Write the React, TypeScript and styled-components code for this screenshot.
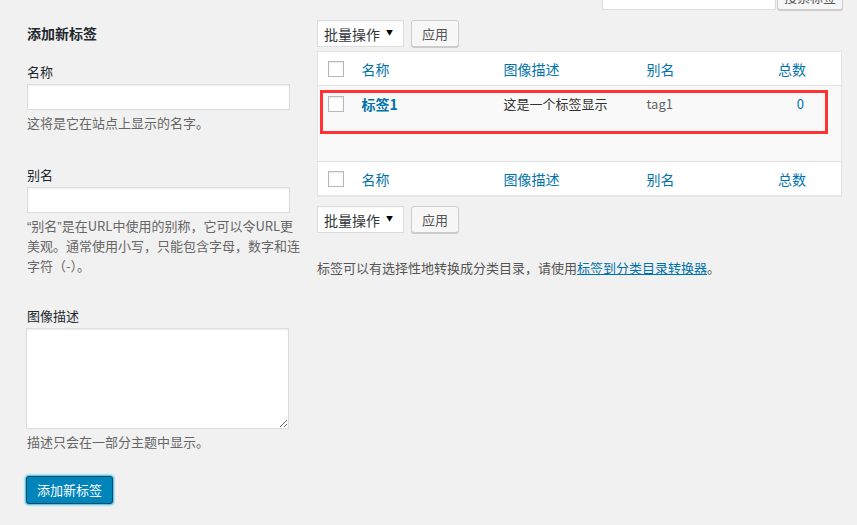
import React from 'react';
import styled, { createGlobalStyle } from 'styled-components';

const GlobalStyle = createGlobalStyle`
  html, body {
    margin: 0;
    padding: 0;
    background: #f1f1f1;
    overflow: hidden;
  }
  body {
    font-family: "Noto Sans CJK SC", "Open Sans", sans-serif;
    font-size: 13px;
    line-height: 20px;
    color: #444;
  }
  * {
    box-sizing: border-box;
  }
`;

const Page = styled.div`
  display: flex;
  align-items: flex-start;
  width: 857px;
  height: 525px;
  overflow: hidden;
`;

const ColLeft = styled.div`
  width: 277px;
  margin-left: 27px;
  padding-top: 23px;
`;

const ColRight = styled.div`
  width: 525px;
  margin-left: 13px;
`;

const Heading = styled.h2`
  margin: 0 0 19px;
  font-size: 14px;
  line-height: 20px;
  font-weight: 700;
  color: #23282d;
`;

const Field = styled.div<{ $gap?: number }>`
  margin-bottom: ${p => p.$gap ?? 32}px;
`;

const Label = styled.label`
  display: block;
  color: #23282d;
  line-height: 20px;
  margin-bottom: 2px;
`;

const TextInput = styled.input`
  display: block;
  width: 263px;
  height: 26px;
  margin: 0;
  padding: 3px 5px;
  border: 1px solid #ddd;
  background: #fff;
  box-shadow: inset 0 1px 2px rgba(0, 0, 0, 0.07);
  font: inherit;
  outline: none;
`;

const TextArea = styled.textarea`
  display: block;
  width: 263px;
  height: 101px;
  margin: 0 0 0 -1px;
  padding: 2px 6px;
  border: 1px solid #ddd;
  background: #fff;
  box-shadow: inset 0 1px 2px rgba(0, 0, 0, 0.07);
  font: inherit;
  outline: none;
`;

const Help = styled.p`
  margin: 3px 0 0;
  color: #666;
  line-height: 19.5px;
`;

const Quote = styled.span`
  font-family: "Liberation Sans", sans-serif;
`;

const PrimaryButton = styled.button`
  height: 28px;
  margin: 4px 0 0 -1px;
  padding: 0 10px;
  border: 1px solid #0b4d6e;
  border-radius: 3px;
  background: #0085ba;
  color: #fff;
  font: inherit;
  line-height: 26px;
  box-shadow: 0 0 2px 1px #33b3db;
  cursor: pointer;
`;

const SearchBar = styled.div`
  display: flex;
  justify-content: flex-end;
  gap: 1px;
  margin-top: -18px;
  margin-right: -1px;
`;

const SearchInput = styled.input`
  width: 174px;
  height: 28px;
  margin: 0;
  border: 1px solid #ddd;
  background: #fff;
  box-shadow: inset 0 1px 2px rgba(0, 0, 0, 0.07);
  font: inherit;
  outline: none;
`;

const Button = styled.button<{ $pad?: number; $height?: number }>`
  height: ${p => p.$height ?? 27}px;
  padding: 0 ${p => p.$pad ?? 10}px;
  border: 1px solid #ccc;
  border-radius: 3px;
  background: #f7f7f7;
  color: #555;
  font: inherit;
  line-height: 25px;
  box-shadow: 0 1px 0 #ccc;
  cursor: pointer;
  white-space: nowrap;
`;

const TableNav = styled.div<{ $top: number; $bottom: number }>`
  display: flex;
  align-items: center;
  gap: 7px;
  margin: ${p => p.$top}px 0 ${p => p.$bottom}px;
`;

const BulkSelect = styled.div`
  display: flex;
  align-items: center;
  justify-content: space-between;
  width: 87px;
  height: 27px;
  padding: 0 10px 0 6px;
  border: 1px solid #ddd;
  background: #fff;
  color: #32373c;
  font-size: 14px;
  box-shadow: inset 0 1px 2px rgba(0, 0, 0, 0.04);
`;

const Caret = styled.span`
  font-size: 7px;
  line-height: 7px;
  color: #000;
  margin-top: -3px;
`;

const TableWrap = styled.div`
  position: relative;
`;

const Table = styled.table`
  width: 524px;
  border-collapse: collapse;
  table-layout: fixed;
  background: #fff;
  border: 1px solid #e5e5e5;
  box-shadow: 0 1px 1px rgba(0, 0, 0, 0.04);
`;

const HeadCell = styled.th<{ $align?: string; $padRight?: number }>`
  height: 34px;
  padding: 0 ${p => p.$padRight ?? 10}px 0 10px;
  text-align: ${p => p.$align ?? 'left'};
  font-weight: 400;
  font-size: 14px;
  color: #0073aa;
  vertical-align: middle;
`;

const HeadRow = styled.tr<{ $top?: boolean }>`
  ${p => (p.$top ? 'border-bottom: 1px solid #e1e1e1;' : 'border-top: 1px solid #e1e1e1;')}
`;

const BodyRow = styled.tr`
  background: #f9f9f9;
`;

const Cell = styled.td<{ $align?: string }>`
  height: 76px;
  padding: 8px 10px 0;
  vertical-align: top;
  text-align: ${p => p.$align ?? 'left'};
  color: #333;
`;

const CheckCell = styled.td<{ $top?: number }>`
  padding: ${p => p.$top ?? 0}px 0 0 10px;
  vertical-align: ${p => (p.$top ? 'top' : 'middle')};
`;

const CheckBox = styled.span`
  display: block;
  width: 16px;
  height: 16px;
  border: 1px solid #b4b9be;
  background: #fff;
  box-shadow: inset 0 1px 2px rgba(0, 0, 0, 0.1);
`;

const RowTitle = styled.a`
  font-weight: 700;
  font-size: 14px;
  color: #0073aa;
  text-decoration: none;
`;

const Slug = styled.span`
  color: #666;
`;

const Count = styled.a`
  color: #0073aa;
  text-decoration: none;
  padding-right: 27px;
`;

const Highlight = styled.div`
  position: absolute;
  left: 3px;
  top: 39px;
  width: 508px;
  height: 44px;
  border: 3px solid #f33;
  pointer-events: none;
`;

const Note = styled.p`
  margin: 0;
  color: #555;
  line-height: 20px;
`;

const NoteLink = styled.a`
  color: #0073aa;
  text-decoration: underline;
`;

const columns = [
  { title: '名称', width: 142 },
  { title: '图像描述', width: 143 },
  { title: '别名', width: 131 },
];

function HeaderRow({ top }: { top?: boolean }) {
  return (
    <HeadRow $top={top}>
      <CheckCell as="th">
        <CheckBox />
      </CheckCell>
      {columns.map(c => (
        <HeadCell key={c.title}>{c.title}</HeadCell>
      ))}
      <HeadCell $align="right" $padRight={35}>
        总数
      </HeadCell>
    </HeadRow>
  );
}

function BulkActions({ top, bottom }: { top: number; bottom: number }) {
  return (
    <TableNav $top={top} $bottom={bottom}>
      <BulkSelect>
        批量操作
        <Caret>▼</Caret>
      </BulkSelect>
      <Button>应用</Button>
    </TableNav>
  );
}

export default function App() {
  return (
    <>
      <GlobalStyle />
      <Page>
        <ColLeft>
          <Heading>添加新标签</Heading>
          <Field $gap={32}>
            <Label>名称</Label>
            <TextInput type="text" />
            <Help>这将是它在站点上显示的名字。</Help>
          </Field>
          <Field $gap={31}>
            <Label>别名</Label>
            <TextInput type="text" />
            <Help>
              <Quote>“</Quote>别名<Quote>”</Quote>是在URL中使用的别称，它可以令URL更美观。通常使用小写，只能包含字母，数字和连字符（-）。
            </Help>
          </Field>
          <Field $gap={20}>
            <Label>图像描述</Label>
            <TextArea />
            <Help>描述只会在一部分主题中显示。</Help>
          </Field>
          <PrimaryButton>添加新标签</PrimaryButton>
        </ColLeft>

        <ColRight>
          <SearchBar>
            <SearchInput type="search" />
            <Button $pad={6} $height={28}>
              搜索标签
            </Button>
          </SearchBar>
          <BulkActions top={10} bottom={4} />
          <TableWrap>
            <Table>
              <colgroup>
                <col style={{ width: 34 }} />
                {columns.map(c => (
                  <col key={c.title} style={{ width: c.width }} />
                ))}
                <col style={{ width: 74 }} />
              </colgroup>
              <thead>
                <HeaderRow top />
              </thead>
              <tbody>
                <BodyRow>
                  <CheckCell $top={10}>
                    <CheckBox />
                  </CheckCell>
                  <Cell>
                    <RowTitle href="#">标签1</RowTitle>
                  </Cell>
                  <Cell>这是一个标签显示</Cell>
                  <Cell>
                    <Slug>tag1</Slug>
                  </Cell>
                  <Cell $align="right">
                    <Count href="#">0</Count>
                  </Cell>
                </BodyRow>
              </tbody>
              <tfoot>
                <HeaderRow />
              </tfoot>
            </Table>
            <Highlight />
          </TableWrap>
          <BulkActions top={10} bottom={25} />
          <Note>
            标签可以有选择性地转换成分类目录，请使用<NoteLink href="#">标签到分类目录转换器</NoteLink>。
          </Note>
        </ColRight>
      </Page>
    </>
  );
}
